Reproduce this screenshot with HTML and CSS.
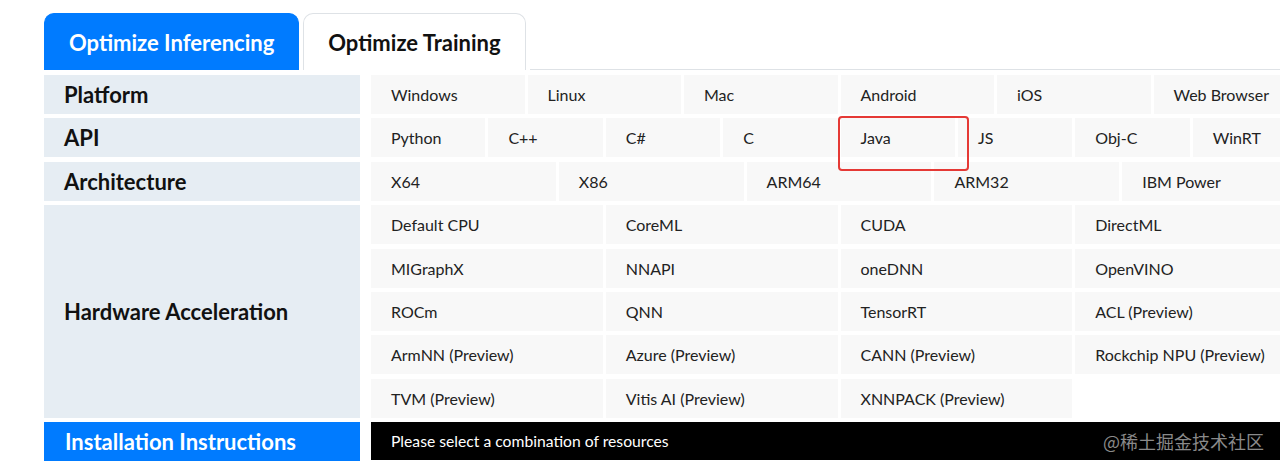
FILE: index.html
```html
<html>
	<head>
		<title>Install ONNX Runtime</title>
		<link rel="stylesheet" href="styles.css">
	</head>
	<body>
	<div class="page">
		<div class="tabs">
			<div class="tab active">Optimize Inferencing</div>
			<div class="tab">Optimize Training</div>
			<div class="tab-rest"></div>
		</div>

		<div class="matrix">
			<div class="label">Platform</div>
			<div class="opts cols6">
				<div class="opt">Windows</div>
				<div class="opt">Linux</div>
				<div class="opt">Mac</div>
				<div class="opt">Android</div>
				<div class="opt">iOS</div>
				<div class="opt">Web Browser</div>
			</div>

			<div class="label">API</div>
			<div class="opts cols8">
				<div class="opt">Python</div>
				<div class="opt">C++</div>
				<div class="opt">C#</div>
				<div class="opt">C</div>
				<div class="opt">Java</div>
				<div class="opt">JS</div>
				<div class="opt">Obj-C</div>
				<div class="opt">WinRT</div>
			</div>

			<div class="label">Architecture</div>
			<div class="opts cols5">
				<div class="opt">X64</div>
				<div class="opt">X86</div>
				<div class="opt">ARM64</div>
				<div class="opt">ARM32</div>
				<div class="opt">IBM Power</div>
			</div>

			<div class="label">Hardware Acceleration</div>
			<div class="opts cols4">
				<div class="opt">Default CPU</div>
				<div class="opt">CoreML</div>
				<div class="opt">CUDA</div>
				<div class="opt">DirectML</div>
				<div class="opt">MIGraphX</div>
				<div class="opt">NNAPI</div>
				<div class="opt">oneDNN</div>
				<div class="opt">OpenVINO</div>
				<div class="opt">ROCm</div>
				<div class="opt">QNN</div>
				<div class="opt">TensorRT</div>
				<div class="opt">ACL (Preview)</div>
				<div class="opt">ArmNN (Preview)</div>
				<div class="opt">Azure (Preview)</div>
				<div class="opt">CANN (Preview)</div>
				<div class="opt">Rockchip NPU (Preview)</div>
				<div class="opt">TVM (Preview)</div>
				<div class="opt">Vitis AI (Preview)</div>
				<div class="opt">XNNPACK (Preview)</div>
			</div>

			<div class="label install">Installation Instructions</div>
			<div class="command">
				Please select a combination of resources
				<span class="watermark">@稀土掘金技术社区</span>
			</div>
		</div>

		<div class="mark"></div>
	</div>
	</body>
</html>
```

FILE: styles.css
```css
body {
	margin: 0;
	background: #ffffff;
	font-family: Lato, "Noto Sans", sans-serif;
	overflow: hidden;
}

.page {
	position: relative;
	padding: 13px 0 0 44px;
	width: 1300px;
}

/* tabs */
.tabs {
	display: flex;
	align-items: flex-end;
	gap: 4px;
	height: 57px;
}

.tab {
	height: 57px;
	box-sizing: border-box;
	padding: 0 24px 0 24px;
	display: flex;
	align-items: center;
	font-size: 22px;
	font-weight: bold;
	color: #111111;
	border: 1px solid #dee2e6;
	border-bottom: none;
	border-radius: 10px 10px 0 0;
	background: #ffffff;
}

.tab.active {
	background: #007bff;
	border-color: #007bff;
	color: #ffffff;
}

.tab-rest {
	flex: 1;
	border-bottom: 1px solid #dee2e6;
}

/* selector matrix */
.matrix {
	display: grid;
	grid-template-columns: 316px 936px;
	column-gap: 11px;
	row-gap: 4.4px;
	margin-top: 5px;
}

.label {
	background: #e6edf3;
	color: #111111;
	font-size: 22px;
	font-weight: bold;
	padding-left: 20px;
	display: flex;
	align-items: center;
	min-height: 39px;
}

.opts {
	display: grid;
	column-gap: 3px;
	row-gap: 4.4px;
	grid-auto-rows: 39px;
}

.cols4 { grid-template-columns: repeat(4, 1fr); }
.cols5 { grid-template-columns: repeat(5, 1fr); }
.cols6 { grid-template-columns: repeat(6, 1fr); }
.cols8 { grid-template-columns: repeat(8, 1fr); }

.opt {
	background: #f8f8f8;
	color: #222222;
	font-size: 16px;
	padding-left: 20px;
	display: flex;
	align-items: center;
	white-space: nowrap;
}

.label.install {
	background: #007bff;
	color: #ffffff;
	padding-left: 21px;
}

.command {
	background: #000000;
	color: #ffffff;
	font-size: 15.7px;
	padding-left: 20px;
	display: flex;
	align-items: center;
	height: 38px;
	position: relative;
}

.watermark {
	position: absolute;
	left: 732px;
	top: 8px;
	font-family: "Noto Sans CJK SC", sans-serif;
	font-size: 18px;
	color: #8a8a8a;
	line-height: 22px;
}

/* red highlight drawn over the Java option */
.mark {
	position: absolute;
	left: 838px;
	top: 116px;
	width: 131px;
	height: 55px;
	box-sizing: border-box;
	border: 2px solid #e53935;
	border-radius: 4px;
}
```
